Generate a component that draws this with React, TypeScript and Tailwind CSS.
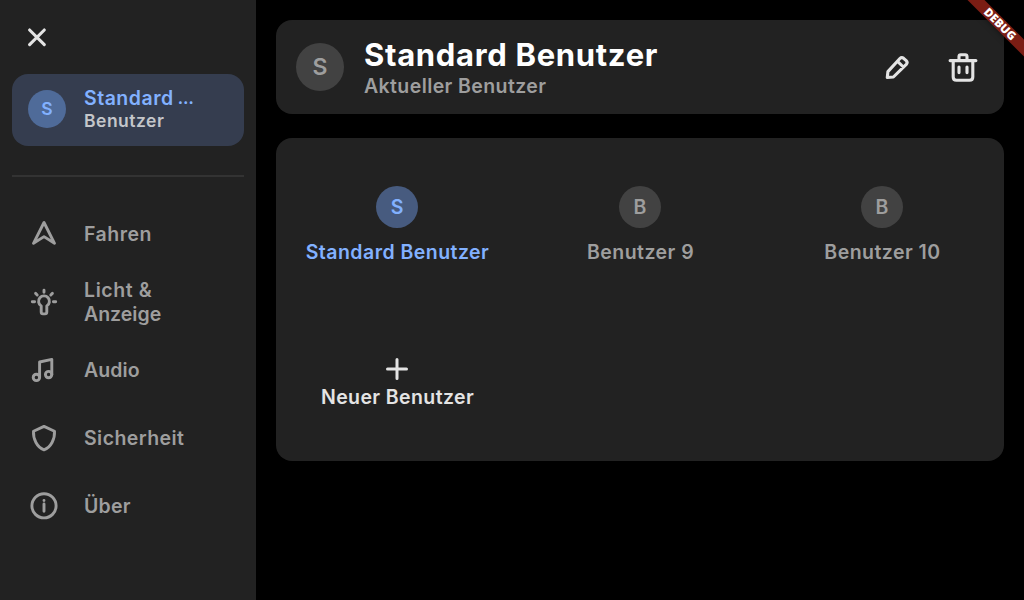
import type { ReactNode } from "react";

type IconProps = { className?: string; width?: number; children: ReactNode };

function Icon({ className = "", width = 2.9, children }: IconProps) {
  return (
    <svg
      viewBox="0 0 32 32"
      className={`block size-8 shrink-0 ${className}`}
      fill="none"
      stroke="currentColor"
      strokeWidth={width}
      strokeLinecap="round"
      strokeLinejoin="round"
    >
      {children}
    </svg>
  );
}

const navItems = [
  {
    lines: [{ text: "Fahren", tracking: "tracking-[0.5px]" }],
    icon: <path d="M16 4.5 L5.5 25.3 L16 18.6 L26.5 25.3 Z" />,
  },
  {
    lines: [
      { text: "Licht &", tracking: "tracking-[0.6px]" },
      { text: "Anzeige", tracking: "tracking-normal" },
    ],
    icon: (
      <>
        <path d="M13.2 19.9 V26.1 Q13.2 27.9 15 27.9 H17 Q18.8 27.9 18.8 26.1 V19.9 A5.4 5.4 0 1 0 13.2 19.9 Z" />
        <path d="M16 4.2 V6.2 M4.3 15.7 H6.6 M25.4 15.7 H27.7 M7.6 7.4 L9.2 9 M24.4 7.4 L22.8 9" />
      </>
    ),
  },
  {
    lines: [{ text: "Audio", tracking: "tracking-[0.1px]" }],
    icon: (
      <>
        <circle cx="8.4" cy="23.4" r="3.2" />
        <circle cx="20.6" cy="20.6" r="3.2" />
        <path d="M11.6 23.4 V8 L23.8 5.4 V20.6" />
      </>
    ),
  },
  {
    lines: [{ text: "Sicherheit", tracking: "tracking-[0.42px]" }],
    icon: <path d="M16 4.4 L26.5 9.2 C27 17 23 25.4 16 27.8 C9 25.4 5 17 5.5 9.2 Z" />,
  },
  {
    lines: [{ text: "Über", tracking: "tracking-[0.2px]" }],
    icon: (
      <>
        <circle cx="16" cy="15.8" r="12.1" />
        <path d="M16 14 V21.2 M16 10.4 V10.5" />
      </>
    ),
  },
];

const users = [
  { initial: "S", name: "Standard Benutzer", active: true },
  { initial: "B", name: "Benutzer 9", active: false },
  { initial: "B", name: "Benutzer 10", active: false },
];

function Sidebar() {
  return (
    <aside className="flex w-64 shrink-0 flex-col bg-[#222222] px-3 text-[#9e9e9e]">
      <button className="mt-[21px] ml-[9px] size-8 text-[#e4e4e4]" aria-label="Schließen">
        <Icon width={3.1}>
          <path d="M8.6 9 L23.3 23.7 M23.3 9 L8.6 23.7" />
        </Icon>
      </button>
      <div className="mt-[21px] flex h-[72px] shrink-0 items-center rounded-2xl bg-[#353d4f] pl-4">
        <div className="-mt-0.5 flex size-[38px] items-center justify-center rounded-full bg-[#4f6b99] text-[17.5px] font-semibold text-[#82b1ff]">
          S
        </div>
        <div className="-mt-[3px] ml-[18px] font-semibold">
          <div className="flex gap-1 text-[19.5px] leading-6 tracking-[0.5px] text-[#82b1ff]">
            <span>Standard</span>
            <span className="text-[16px] font-bold">…</span>
          </div>
          <div className="text-[17.5px] leading-[22px] tracking-[0.5px] text-[#c4c6ca]">Benutzer</div>
        </div>
      </div>
      <div className="mt-[29px] h-0.5 shrink-0 bg-[#333333]" />
      <nav className="mt-[23px] flex flex-col">
        {navItems.map((item) => (
          <a key={item.lines[0].text} className="flex h-[68px] items-center pl-4">
            <Icon>{item.icon}</Icon>
            <span className="ml-6 flex flex-col text-[19.5px] leading-6 font-semibold">
              {item.lines.map((line) => (
                <span key={line.text} className={line.tracking}>
                  {line.text}
                </span>
              ))}
            </span>
          </a>
        ))}
      </nav>
    </aside>
  );
}

function Header() {
  return (
    <header className="flex h-[94px] shrink-0 items-center rounded-2xl bg-[#222222] pl-5">
      <div className="flex size-12 items-center justify-center rounded-full bg-[#424242] text-[23px] font-semibold text-[#9e9e9e]">
        S
      </div>
      <div className="ml-5 flex-1">
        <h1 className="text-[31px] leading-[38px] font-bold tracking-[0.68px] text-white">Standard Benutzer</h1>
        <p className="text-[19.5px] leading-6 font-semibold tracking-[0.4px] text-[#9e9e9e]">Aktueller Benutzer</p>
      </div>
      <div className="mr-[25px] flex gap-[34px] text-[#e4e4e4]">
        <Icon width={3.1}>
          <path d="M6.3 26.5 L6.9 20.6 L18.9 7.5 Q20.7 5.7 22.6 7.3 L25.2 9.7 Q27 11.5 25.3 13.4 L12.4 26 Z M16.5 10.4 L22.4 16" />
        </Icon>
        <Icon width={3.1}>
          <path d="M3.1 9.6 H28.9 M12 9.2 V5.6 Q12 3.8 13.8 3.8 H18.2 Q20 3.8 20 5.6 V9.2 M6.2 10 V25.9 Q6.2 29.2 9.5 29.2 H22.5 Q25.8 29.2 25.8 25.9 V10 M12 16 V21.6 M20 16 V21.6" />
        </Icon>
      </div>
    </header>
  );
}

function UserGrid() {
  return (
    <section className="mt-6 grid h-[323px] shrink-0 grid-cols-[242px_244px_240px] grid-rows-[220px_103px] rounded-2xl bg-[#222222] text-[19.5px] leading-6 font-semibold tracking-[0.47px]">
      {users.map((user) => (
        <div
          key={user.name}
          className={`flex flex-col items-center pt-12 ${user.active ? "text-[#82b1ff]" : "text-[#9e9e9e]"}`}
        >
          <div
            className={`flex size-[42px] items-center justify-center rounded-full tracking-normal ${
              user.active ? "bg-[#475b7f]" : "bg-[#424242]"
            }`}
          >
            {user.initial}
          </div>
          <div className="mt-3 pl-px whitespace-nowrap">{user.name}</div>
        </div>
      ))}
      <div className="flex flex-col items-center text-[#e4e4e4]">
        <Icon width={3} className="-mt-[5px]">
          <path d="M16 6.5 V25.5 M6.5 16 H25.5" />
        </Icon>
        <div className="pl-px tracking-[0.4px]">Neuer Benutzer</div>
      </div>
    </section>
  );
}

export default function App() {
  return (
    <div className="relative flex h-[600px] w-[1024px] overflow-hidden bg-black font-[Inter,sans-serif]">
      <Sidebar />
      <main className="flex flex-1 flex-col p-5">
        <Header />
        <UserGrid />
      </main>
      <div className="absolute top-0 right-0 size-20 overflow-hidden">
        <div className="absolute top-[18px] left-4 flex h-3 w-20 rotate-45 items-center justify-center bg-[#7b1d14] font-['Noto_Sans',sans-serif] text-[11.6px] leading-3 font-black text-white shadow-[0_0_6px_rgba(0,0,0,0.5)]">
          DEBUG
        </div>
      </div>
    </div>
  );
}
